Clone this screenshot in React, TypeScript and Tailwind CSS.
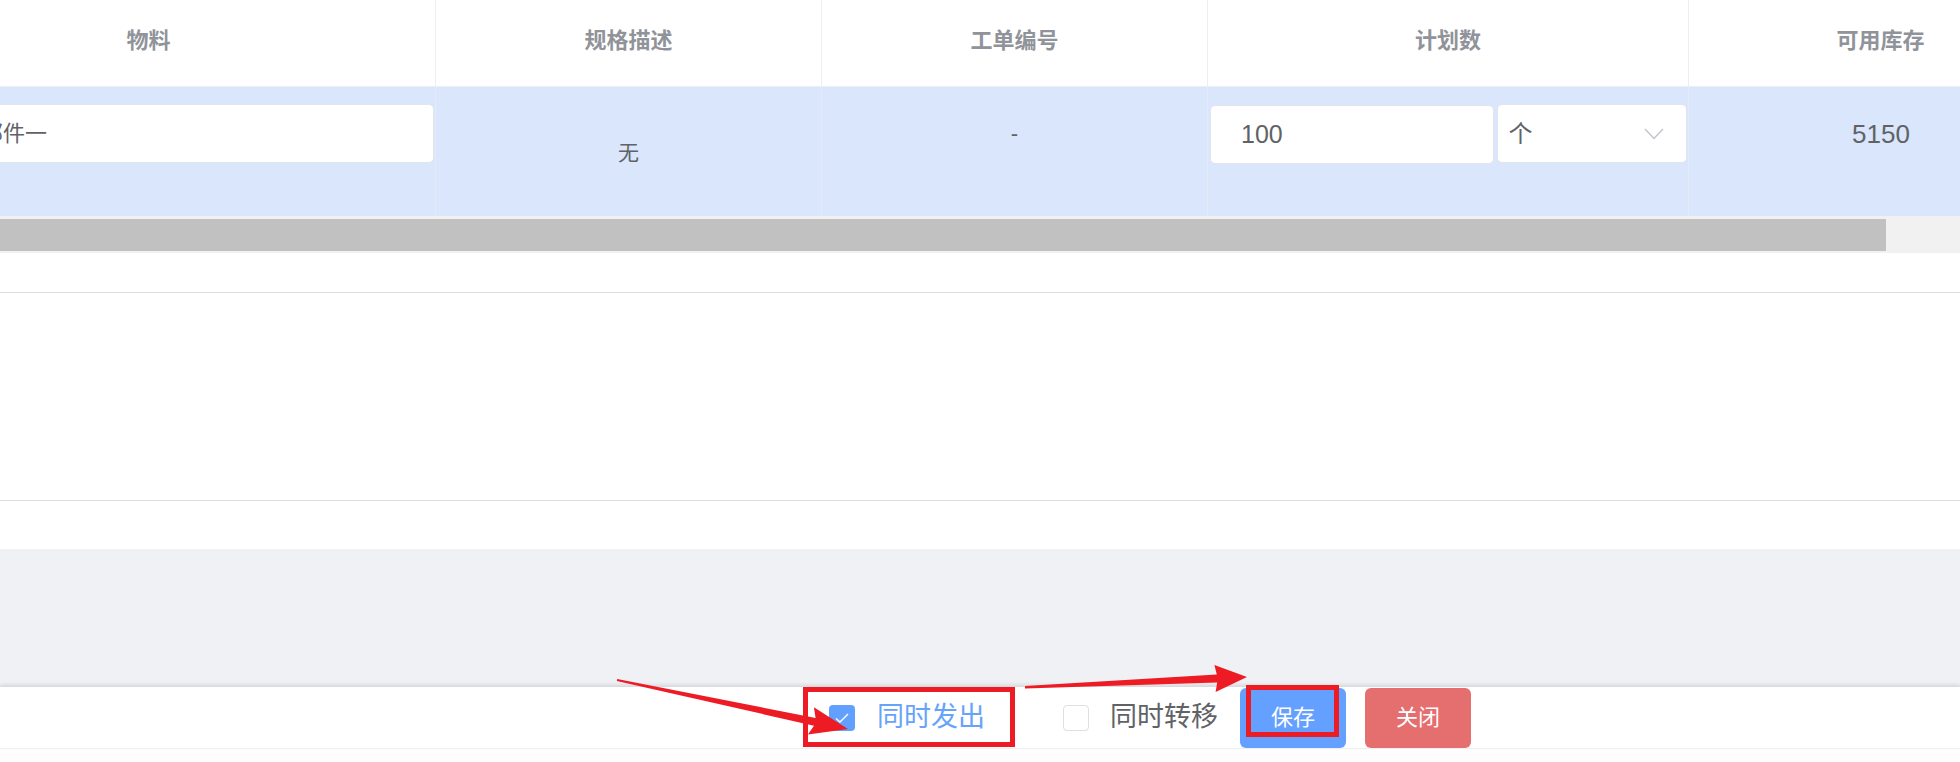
import React from "react";

const cols = [574, 386, 386, 481, 384];

function Check() {
  return (
    <svg width="16" height="12" viewBox="0 0 16 12" fill="none">
      <path d="M2 6.5 L6 10 L14 2" stroke="white" strokeWidth="1.4" />
    </svg>
  );
}

export default function App() {
  return (
    <div
      className="relative w-[1960px] h-[762px] overflow-hidden bg-white flex flex-col"
      style={{ fontFamily: '"Liberation Sans", "Noto Sans CJK SC", sans-serif' }}
    >
      {/* table */}
      <div className="w-full overflow-hidden">
        <div className="-ml-[138px] w-max">
          {/* header */}
          <div className="flex h-[87px] border-b border-[#ebeef5] bg-white">
            {["物料", "规格描述", "工单编号", "计划数", "可用库存"].map((h, i) => (
              <div
                key={h}
                style={{ width: cols[i] }}
                className="flex items-center justify-center pb-[5px] border-r border-[#ebeef5] text-[22px] font-bold text-[#909399]"
              >
                {h}
              </div>
            ))}
          </div>
          {/* data row */}
          <div className="flex h-[129px] bg-[#d9e6fb] text-[#606266]">
            <div className="w-[574px] border-r border-[#e4ebf6] px-[1px] pt-[17px]">
              <div className="h-[59px] w-full rounded-[5px] bg-white border border-[#e1e5ec] flex items-center pl-[117px] text-[22px]">
                部件一
              </div>
            </div>
            <div className="w-[386px] border-r border-[#e4ebf6] flex justify-center pt-[54px] text-[21px] leading-[24px]">
              无
            </div>
            <div className="w-[386px] border-r border-[#e4ebf6] flex justify-center pt-[35px] text-[22px] leading-[24px]">
              -
            </div>
            <div className="w-[481px] border-r border-[#e4ebf6] flex gap-[3px] pl-[2px] pr-[1px] pt-[17px]">
              <div className="mt-[1px] h-[59px] w-[285px] rounded-[5px] bg-white border border-[#e1e5ec] flex items-center pl-[30px] text-[25px]">
                100
              </div>
              <div className="h-[59px] w-[190px] rounded-[5px] bg-white border border-[#e1e5ec] flex items-center justify-between pl-[10px] pr-[22px] text-[24px]">
                <span>个</span>
                <svg width="20" height="12" viewBox="0 0 20 12" fill="none">
                  <path d="M1 1 L10 10.5 L19 1" stroke="#c0c4cc" strokeWidth="1.4" />
                </svg>
              </div>
            </div>
            <div className="w-[384px] flex justify-center pt-[34px] text-[26px] leading-[26px]">
              5150
            </div>
          </div>
        </div>
      </div>

      {/* scrollbar */}
      <div className="h-[37px] bg-[#f1f1f1] pt-[3px]">
        <div className="h-[32px] w-[1886px] bg-[#c1c1c1]" />
      </div>

      {/* empty area */}
      <div className="h-[296px] bg-white pt-[39px]">
        <div className="h-[1px] bg-[#dcdee6]" />
        <div className="h-[207px]" />
        <div className="h-[1px] bg-[#dcdee6]" />
      </div>

      {/* gray area */}
      <div className="h-[138px] bg-[#f0f1f5]" />

      {/* footer */}
      <div className="relative z-10 flex-1 bg-[#fdfdfd] shadow-[0_-2px_4px_rgba(0,0,0,0.12)]">
        <div className="h-[62px] bg-white border-b border-[#efefef] flex items-center pl-[829px]">
          <div className="flex items-center">
            <div className="w-[26px] h-[26px] rounded-[4px] bg-[#62a0ff] flex items-center justify-center">
              <Check />
            </div>
            <span className="ml-[22px] text-[27px] text-[#66a3fb]">同时发出</span>
          </div>
          <div className="flex items-center ml-[78px]">
            <div className="w-[26px] h-[26px] rounded-[4px] bg-white border border-[#dcdfe6]" />
            <span className="ml-[21px] text-[27px] text-[#606266]">同时转移</span>
          </div>
          <button className="ml-[22px] w-[106px] h-[60px] rounded-[6px] bg-[#64a0ff] text-white text-[22px]">
            保存
          </button>
          <button className="ml-[19px] w-[106px] h-[60px] rounded-[6px] bg-[#e56e6f] text-white text-[22px]">
            关闭
          </button>
        </div>
      </div>

      {/* annotations */}
      <div className="absolute left-[803px] top-[687px] w-[212px] h-[60px] border-[5px] border-[#ed1c24] z-20" />
      <div className="absolute left-[1246px] top-[685px] w-[93px] h-[52px] border-[5px] border-[#ed1c24] z-20" />
      <svg className="absolute left-0 top-0 z-30 pointer-events-none" width="1960" height="762">
        <polygon
          fill="#ed1c24"
          points="617.2,679 815.6,717.9 813.9,707.2 848,729 807.9,734.6 814,725.7 616.8,681"
        />
        <polygon
          fill="#ed1c24"
          points="1025,686 1216.8,674.4 1214.4,664.9 1247,677 1215.6,691.9 1217.2,682.4 1025,688.5"
        />
      </svg>
    </div>
  );
}
